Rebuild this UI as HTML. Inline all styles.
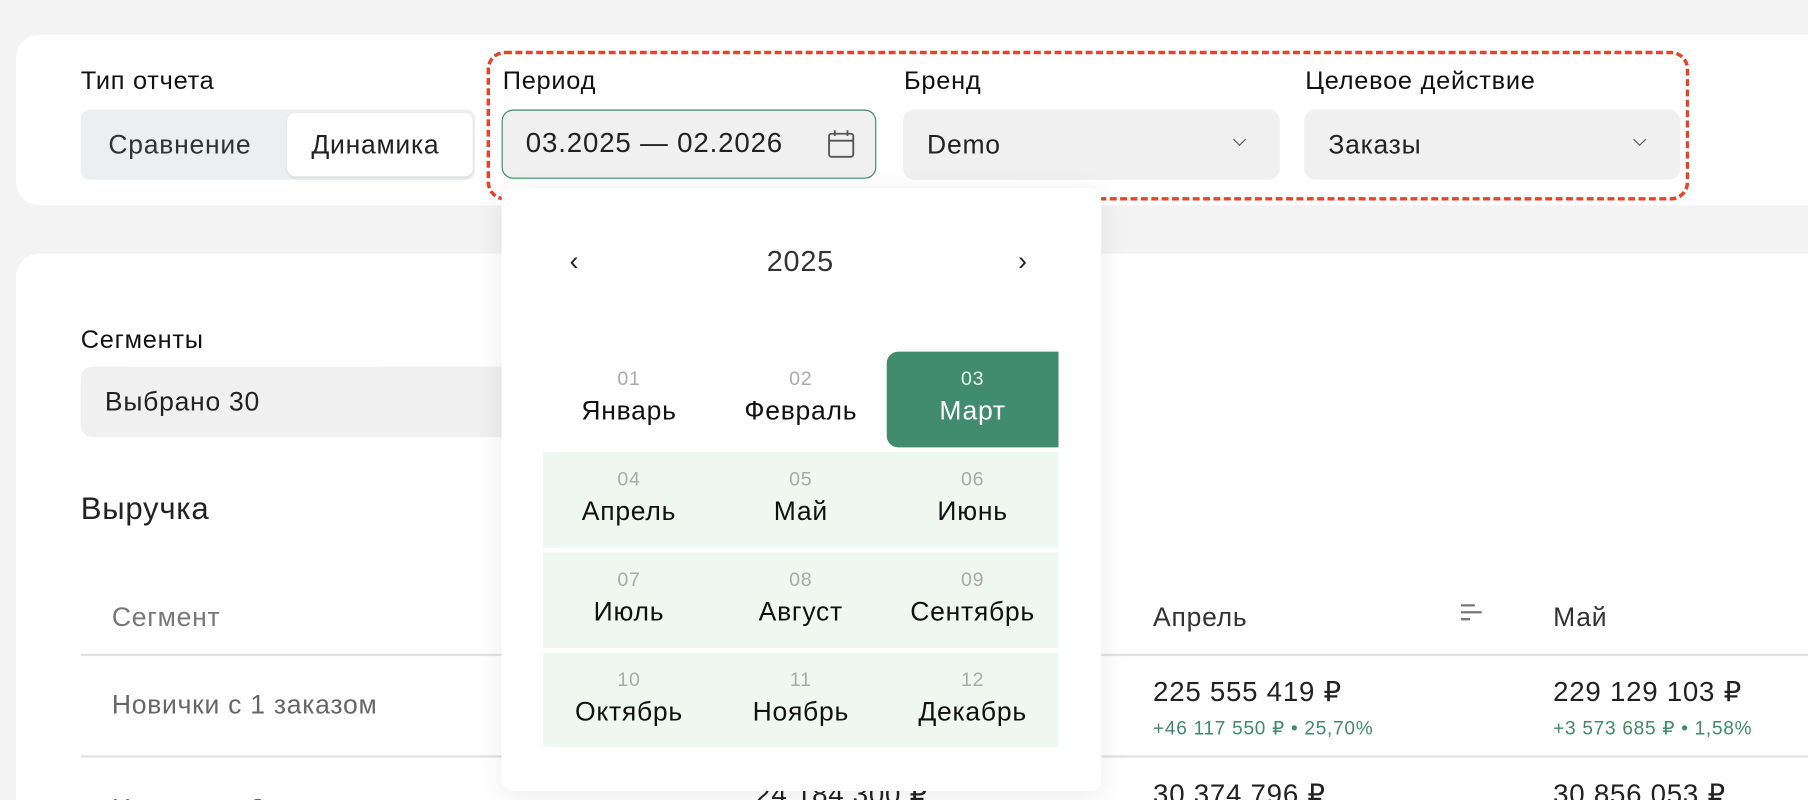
<!DOCTYPE html>
<html><head><meta charset="utf-8"><style>
html,body{margin:0;padding:0;width:1808px;height:800px;overflow:hidden;background:#f3f3f3;}
#w{position:absolute;left:0;top:0;width:1568px;height:694px;overflow:hidden;transform:scale(1.15306);transform-origin:0 0;font-family:"Liberation Sans","DejaVu Sans",sans-serif;color:#1e1e1e;letter-spacing:0.04em;}
.a{position:absolute;white-space:nowrap;}
.card{position:absolute;background:#fff;border-radius:20px;}
.lbl{font-size:22px;font-weight:500;color:#111;}
.sel{position:absolute;background:#f0f0f0;border-radius:10px;height:61px;}
.sel span{position:absolute;left:21px;top:17px;font-size:23px;color:#222;}
.chev{position:absolute;top:22px;width:7px;height:7px;border-right:1.5px solid #555;border-bottom:1.5px solid #555;transform:rotate(45deg);}
.m{position:absolute;width:149px;height:83px;text-align:center;}
.m .n{position:absolute;left:0;right:0;top:14px;font-size:17px;color:#aaa;}
.m .t{position:absolute;left:0;right:0;top:38px;font-size:23px;color:#111;}
.rg{background:#eef7f0;}
.g{color:#3f8a6b;font-size:16.5px;}
.v{font-size:24px;color:#222;}
</style></head><body><div id="w">
<div class="card" style="left:14px;top:30px;width:1600px;height:148px;"></div>
<div class="a lbl" style="left:70px;top:57px;">Тип отчета</div>
<div class="a" style="left:70px;top:95px;width:342px;height:61px;background:#eceef0;border-radius:8px;"></div>
<div class="a" style="left:249px;top:98px;width:161px;height:55px;background:#fff;border-radius:7px;box-shadow:0 1px 2px rgba(0,0,0,.08);"></div>
<div class="a" style="left:94px;top:112px;font-size:23px;color:#333;">Сравнение</div>
<div class="a" style="left:270px;top:112px;font-size:23px;color:#222;">Динамика</div>

<div class="a lbl" style="left:436px;top:57px;">Период</div>
<div class="a" style="left:435px;top:95px;width:323px;height:58px;background:#f0f0f0;border:1.5px solid #3f8a6b;border-radius:10px;"></div>
<div class="a" style="left:456px;top:111px;font-size:24px;color:#222;letter-spacing:0.03em;">03.2025 — 02.2026</div>
<svg class="a" style="left:717px;top:112px" width="26" height="26" viewBox="0 0 26 26" fill="none" stroke="#555" stroke-width="1.6"><rect x="2" y="4" width="21" height="20" rx="2"/><path d="M2 10h21M7 1v5M18 1v5"/></svg>

<div class="a lbl" style="left:784px;top:57px;">Бренд</div>
<div class="sel" style="left:783px;top:95px;width:327px;"><span>Demo</span><i class="chev" style="left:288px"></i></div>
<div class="a lbl" style="left:1132px;top:57px;">Целевое действие</div>
<div class="sel" style="left:1131px;top:95px;width:326px;"><span>Заказы</span><i class="chev" style="left:287px"></i></div>
<div class="a" style="left:422px;top:44px;width:1037px;height:124px;border:3px dashed #e8432a;border-radius:16px;"></div>

<div class="card" style="left:14px;top:220px;width:1600px;height:500px;"></div>
<div class="a lbl" style="left:70px;top:282px;">Сегменты</div>
<div class="sel" style="left:70px;top:318px;width:380px;"><span>Выбрано 30</span></div>
<div class="a" style="left:70px;top:426px;font-size:27px;font-weight:500;color:#222;">Выручка</div>
<div class="a" style="left:97px;top:522px;font-size:23px;color:#777;">Сегмент</div>
<div class="a" style="left:1000px;top:522px;font-size:23px;color:#333;">Апрель</div>
<svg class="a" style="left:1266px;top:523px" width="22" height="18"><path d="M1 2h12M1 8h18M1 14h8" stroke="#777" stroke-width="2"/></svg>
<div class="a" style="left:1347px;top:522px;font-size:23px;color:#333;">Май</div>
<div class="a" style="left:70px;top:567px;width:1520px;height:2px;background:#dde2e6;"></div>
<div class="a" style="left:97px;top:598px;font-size:23px;color:#666;">Новички с 1 заказом</div>
<div class="a v" style="left:1000px;top:586px;">225 555 419 ₽</div>
<div class="a g" style="left:1000px;top:622px;">+46 117 550 ₽ • 25,70%</div>
<div class="a v" style="left:1347px;top:586px;">229 129 103 ₽</div>
<div class="a g" style="left:1347px;top:622px;">+3 573 685 ₽ • 1,58%</div>
<div class="a" style="left:70px;top:655px;width:1520px;height:2px;background:#dde2e6;"></div>
<div class="a" style="left:97px;top:688px;font-size:23px;color:#666;">Новички с 2 заказами</div>
<div class="a v" style="left:655px;top:675px;">24 184 300 ₽</div>
<div class="a v" style="left:1000px;top:675px;">30 374 796 ₽</div>
<div class="a v" style="left:1347px;top:675px;">30 856 053 ₽</div>

<div class="a" style="left:435px;top:163px;width:520px;height:523px;background:#fff;border-radius:10px;box-shadow:0 4px 24px rgba(0,0,0,.08);"></div>
<div class="a" style="left:494px;top:213px;font-size:23px;color:#222;">‹</div>
<div class="a" style="left:665px;top:213px;font-size:25px;color:#333;">2025</div>
<div class="a" style="left:883px;top:213px;font-size:23px;color:#222;">›</div>
<div class="a rg" style="left:471px;top:392px;width:447px;height:83px;"></div>
<div class="a rg" style="left:471px;top:479px;width:447px;height:83px;"></div>
<div class="a rg" style="left:471px;top:566px;width:447px;height:82px;"></div>
<div class="a" style="left:769px;top:305px;width:149px;height:83px;background:#418c6e;border-radius:10px 0 0 10px;"></div>
<div class="m" style="left:471px;top:305px"><div class="n">01</div><div class="t">Январь</div></div>
<div class="m" style="left:620px;top:305px"><div class="n">02</div><div class="t">Февраль</div></div>
<div class="m" style="left:769px;top:305px"><div class="n" style="color:#e6f2ec">03</div><div class="t" style="color:#fff">Март</div></div>
<div class="m" style="left:471px;top:392px"><div class="n">04</div><div class="t">Апрель</div></div>
<div class="m" style="left:620px;top:392px"><div class="n">05</div><div class="t">Май</div></div>
<div class="m" style="left:769px;top:392px"><div class="n">06</div><div class="t">Июнь</div></div>
<div class="m" style="left:471px;top:479px"><div class="n">07</div><div class="t">Июль</div></div>
<div class="m" style="left:620px;top:479px"><div class="n">08</div><div class="t">Август</div></div>
<div class="m" style="left:769px;top:479px"><div class="n">09</div><div class="t">Сентябрь</div></div>
<div class="m" style="left:471px;top:566px"><div class="n">10</div><div class="t">Октябрь</div></div>
<div class="m" style="left:620px;top:566px"><div class="n">11</div><div class="t">Ноябрь</div></div>
<div class="m" style="left:769px;top:566px"><div class="n">12</div><div class="t">Декабрь</div></div>
</div></body></html>
